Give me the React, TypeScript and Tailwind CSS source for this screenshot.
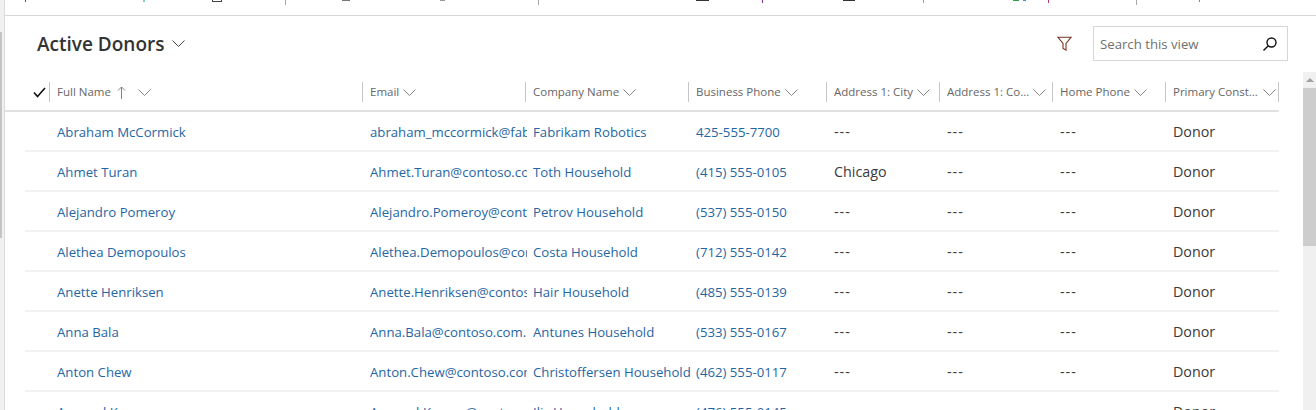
const rows = [
  ["Abraham McCormick", "abraham_mccormick@fabrikam.com", "Fabrikam Robotics", "425-555-7700", "---"],
  ["Ahmet Turan", "Ahmet.Turan@contoso.com", "Toth Household", "(415) 555-0105", "Chicago"],
  ["Alejandro Pomeroy", "Alejandro.Pomeroy@contoso.com", "Petrov Household", "(537) 555-0150", "---"],
  ["Alethea Demopoulos", "Alethea.Demopoulos@contoso.com", "Costa Household", "(712) 555-0142", "---"],
  ["Anette Henriksen", "Anette.Henriksen@contoso.com", "Hair Household", "(485) 555-0139", "---"],
  ["Anna Bala", "Anna.Bala@contoso.com.", "Antunes Household", "(533) 555-0167", "---"],
  ["Anton Chew", "Anton.Chew@contoso.com", "Christoffersen Household", "(462) 555-0117", "---"],
  ["Armand Kovacs", "Armand.Kovacs@contoso.com", "Ilic Household", "(476) 555-0145", "---"],
];

function Chev({ className = "", color = "#767676" }: { className?: string; color?: string }) {
  return (
    <svg width="13" height="7" viewBox="0 0 13 7" fill="none" stroke={color} strokeWidth="0.9" className={className}>
      <path d="M0.5 0.5 L6.5 6.5 L12.5 0.5" />
    </svg>
  );
}

function Head({ w, label, arrow, end }: { w: string; label: string; arrow?: boolean; end?: boolean }) {
  return (
    <div className={`${w} h-5 shrink-0 border-l border-[#c8c6c4] pl-[7px] flex items-center ${end ? "border-r justify-between pr-[2px]" : ""}`}>
      <span className="text-[11.5px] leading-none text-[#666666] whitespace-nowrap">{label}</span>
      {arrow && (
        <svg width="9" height="13" viewBox="0 0 9 13" fill="none" stroke="#767676" strokeWidth="0.9" className="ml-[6px]">
          <path d="M4.5 13 V1 M1 4.5 L4.5 1 L8 4.5" />
        </svg>
      )}
      <Chev className={arrow ? "ml-[12px]" : end ? "" : "ml-[4px]"} />
    </div>
  );
}

function Dash({ v }: { v: string }) {
  return <span className={v === "---" ? "tracking-[1px]" : ""}>{v}</span>;
}

function Row({ r }: { r: string[] }) {
  const link = "pt-[2px] text-[13.2px] text-[#1f66a3] whitespace-nowrap overflow-hidden";
  const plain = "text-[14.3px] text-[#3b3a39] whitespace-nowrap overflow-hidden";
  return (
    <div className="h-10 pt-[2px] flex items-center border-b-2 border-[#f3f2f1] shrink-0">
      <div className={`w-[345px] pl-[32px] shrink-0 ${link}`}>{r[0]}</div>
      <div className="w-[163px] pr-[6px] shrink-0">
        <div className={link}>{r[1]}</div>
      </div>
      <div className={`w-[163px] shrink-0 ${link}`}>{r[2]}</div>
      <div className={`w-[138px] shrink-0 ${link}`}>{r[3]}</div>
      <div className={`w-[113px] shrink-0 ${plain}`}><Dash v={r[4]} /></div>
      <div className={`w-[113px] shrink-0 ${plain}`}><Dash v="---" /></div>
      <div className={`w-[113px] shrink-0 ${plain}`}><Dash v="---" /></div>
      <div className={`flex-1 ${plain}`}>Donor</div>
    </div>
  );
}

export default function App() {
  return (
    <div className="w-[1316px] h-[410px] overflow-hidden flex bg-white font-['Open_Sans','Noto_Sans',sans-serif]">
      <div className="w-[5px] shrink-0 border-r border-[#dcdcdc] bg-[#f0f0f0] flex flex-col">
        <div className="h-8 shrink-0" />
        <div className="h-[206px] w-[2px] bg-[#c4c4c4]" />
      </div>
      <div className="flex-1 min-w-0 flex flex-col">
        <div className="h-4 shrink-0 border-b border-[#d8d8d8] flex items-start">
          <div className="ml-[20px] w-px h-[2px] bg-[#0f6cbd]" />
          <div className="ml-[117px] w-[2px] h-[2px] bg-[#86d3ae]" />
          <div className="ml-[67px] w-[10px] h-[2px] border-x border-b border-[#444444]" />
          <div className="ml-[63px] w-px h-[5px] bg-[#a8a8a8]" />
          <div className="ml-[56px] w-[8px] h-px bg-[#777777]" />
          <div className="ml-[90px] w-[5px] h-px bg-[#999999]" />
          <div className="ml-[93px] w-px h-[5px] bg-[#a8a8a8]" />
          <div className="ml-[157px] w-[13px] h-px bg-[#333333]" />
          <div className="ml-[53px] w-px h-[3px] bg-[#8e3a9d]" />
          <div className="ml-[80px] w-[12px] h-px bg-[#333333]" />
          <div className="ml-[68px] w-px h-[3px] bg-[#e08a1e]" />
          <div className="ml-[89px] w-[6px] h-px bg-[#2f9e44]" />
          <div className="ml-[4px] w-[3px] h-px bg-[#4a90d9]" />
          <div className="ml-[22px] w-px h-[3px] bg-[#a83a8c]" />
          <div className="ml-[87px] w-px h-[5px] bg-[#a8a8a8]" />
          <div className="ml-[62px] w-px h-[2px] bg-[#d0762a]" />
        </div>
        <div className="h-[52px] shrink-0 flex items-center pl-[32px] pr-[28px] pt-[3px]">
          <span className="pt-[2px] text-[19px] leading-none font-semibold text-[#333333]">Active Donors</span>
          <Chev className="ml-[8px]" color="#333333" />
          <svg width="15" height="15" viewBox="0 0 15 15" fill="none" stroke="#7a3420" strokeWidth="1.1" className="ml-auto mr-[21px]">
            <path d="M0.8 1.2 H14.2 L9 7.5 V14 L6 12.5 V7.5 Z" />
          </svg>
          <div className="w-[195px] h-[35px] border border-[#d6d6d6] flex items-center pl-[6px] pr-[9px]">
            <span className="pt-[2px] text-[13.2px] text-[#707070]">Search this view</span>
            <svg width="16" height="16" viewBox="0 0 16 16" fill="none" stroke="#111111" strokeWidth="1.4" className="ml-auto">
              <circle cx="9.5" cy="6.5" r="4.5" />
              <path d="M6.3 9.7 L1.5 14.5" />
            </svg>
          </div>
        </div>
        <div className="flex flex-1 min-h-0">
          <div className="w-[1274px] shrink-0 flex flex-col">
            <div className="h-[44px] pt-[6px] shrink-0 flex items-center border-b-2 border-[#e1e1e1]">
              <div className="w-[44px] shrink-0 flex justify-end pr-[3px]">
                <svg width="13" height="11" viewBox="0 0 13 11" fill="none" stroke="#111111" strokeWidth="1.6">
                  <path d="M1 5.5 L4.5 9.5 L12 1" />
                </svg>
              </div>
              <Head w="w-[313px]" label="Full Name" arrow />
              <Head w="w-[163px]" label="Email" />
              <Head w="w-[163px]" label="Company Name" />
              <Head w="w-[138px]" label="Business Phone" />
              <Head w="w-[113px]" label="Address 1: City" />
              <Head w="w-[113px]" label="Address 1: Co..." />
              <Head w="w-[113px]" label="Home Phone" />
              <Head w="w-[114px]" label="Primary Const..." end />
            </div>
            <div className="flex flex-col pl-[20px] overflow-hidden">
              {rows.map((r) => <Row key={r[0]} r={r} />)}
            </div>
          </div>
          <div className="w-[13px] ml-[24px] shrink-0 bg-[#f0f0f0] mt-[4px] flex flex-col">
            <div className="h-4 flex items-center justify-center">
              <div className="w-0 h-0 border-x-[4px] border-x-transparent border-b-[4px] border-b-[#a0a0a0]" />
            </div>
            <div className="h-[158px] bg-[#cdcdcd]" />
          </div>
        </div>
      </div>
    </div>
  );
}
